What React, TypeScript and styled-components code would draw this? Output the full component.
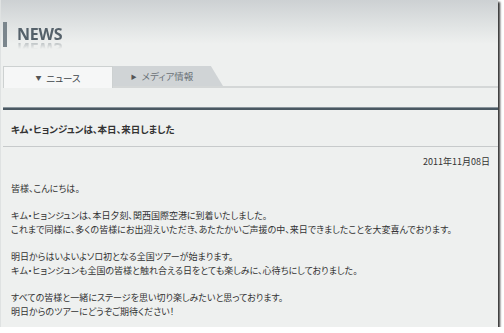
import React from 'react'
import styled, { createGlobalStyle } from 'styled-components'

const GlobalStyle = createGlobalStyle`
  html, body {
    margin: 0;
    padding: 0;
    background: #ffffff;
  }
  body {
    font-family: "Noto Sans CJK JP", "Noto Sans", sans-serif;
    color: #333;
  }
`

const Frame = styled.div`
  width: 497px;
  height: 327px;
  box-shadow: 2px 2px 2px rgba(0, 0, 0, 0.8);
  border-left: 1px solid #dfe2e2;
  background: linear-gradient(#cdd1d3 0px, #e2e5e5 28px, #eef0ef 44px, #eef0ef 100%);
  overflow: hidden;
`

const Header = styled.div`
  display: flex;
  align-items: flex-start;
  padding: 22px 0 0 2px;
  height: 44px;
  box-sizing: border-box;
`

const Bar = styled.div`
  width: 4px;
  height: 25px;
  background: #7b868d;
`

const Title = styled.h1`
  margin: 2px 0 0 10px;
  font-family: "Open Sans", "Noto Sans", sans-serif;
  font-size: 16px;
  line-height: 20px;
  font-weight: 700;
  color: #55616a;
  letter-spacing: -0.2px;
  -webkit-box-reflect: below -5px linear-gradient(transparent 50%, rgba(255, 255, 255, 0.5));
`

const TabBar = styled.div`
  display: flex;
  align-items: flex-end;
  margin: 22px 0 0 2px;
  height: 20px;
  border-bottom: 2px solid #d4d7d7;
`

const Tab = styled.div<{ $active?: boolean }>`
  box-sizing: border-box;
  display: flex;
  align-items: center;
  justify-content: center;
  height: ${p => (p.$active ? '22px' : '20px')};
  margin-bottom: ${p => (p.$active ? '-2px' : '0')};
  width: 110px;
  font-size: 9.5px;
  font-feature-settings: "palt";
  color: ${p => (p.$active ? '#3e4449' : '#6a7177')};
  background: ${p => (p.$active ? '#f6f7f7' : '#d0d4d6')};
  border: ${p => (p.$active ? '1px solid #cdd1d1' : 'none')};
  border-bottom: none;
  padding-right: ${p => (p.$active ? '0' : '12px')};
  clip-path: ${p => (p.$active ? 'none' : 'polygon(0 0, 89% 0, 100% 100%, 0 100%)')};
`

const Arrow = styled.span`
  font-size: 6px;
  margin-right: 5px;
  color: #555;
`

const Article = styled.div`
  margin: 20px 0 0 2px;
  border-top: 2px solid #4a5862;
  box-shadow: 0 -1px 0 #8a959c;
`

const Heading = styled.div`
  padding: 12px 8px 10px;
  font-size: 9.5px;
  line-height: 14px;
  font-weight: 700;
  font-feature-settings: "palt";
  color: #333;
  border-bottom: 1px solid #c7cacb;
`

const Date = styled.div`
  text-align: right;
  padding: 8px 8px 0 0;
  font-size: 9px;
  line-height: 14px;
  font-feature-settings: "palt";
`

const Body = styled.div`
  padding: 13px 0 0 8px;
  font-size: 9px;
  line-height: 14.5px;
  font-feature-settings: "palt";
  color: #333;
`

const Para = styled.p`
  margin: 0 0 12px;
`

export default function App() {
  return (
    <>
      <GlobalStyle />
      <Frame>
        <Header>
          <Bar />
          <Title>NEWS</Title>
        </Header>
        <TabBar>
          <Tab $active>
            <Arrow>▼</Arrow>ニュース
          </Tab>
          <Tab>
            <Arrow>▶</Arrow>メディア情報
          </Tab>
        </TabBar>
        <Article>
          <Heading>キム・ヒョンジュンは、本日、来日しました</Heading>
          <Date>2011年11月08日</Date>
          <Body>
            <Para>皆様、こんにちは。</Para>
            <Para>
              キム・ヒョンジュンは、本日夕刻、関西国際空港に到着いたしました。
              <br />
              これまで同様に、多くの皆様にお出迎えいただき、あたたかいご声援の中、来日できましたことを大変喜んでおります。
            </Para>
            <Para>
              明日からはいよいよソロ初となる全国ツアーが始まります。
              <br />
              キム・ヒョンジュンも全国の皆様と触れ合える日をとても楽しみに、心待ちにしておりました。
            </Para>
            <Para>
              すべての皆様と一緒にステージを思い切り楽しみたいと思っております。
              <br />
              明日からのツアーにどうぞご期待ください！
            </Para>
          </Body>
        </Article>
      </Frame>
    </>
  )
}
